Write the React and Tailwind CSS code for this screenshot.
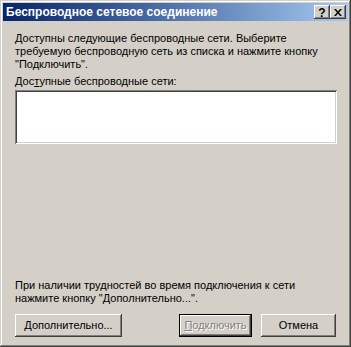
import React from 'react';

const raised = 'shadow-[inset_-1px_-1px_#404040,inset_1px_1px_#ffffff,inset_-2px_-2px_#808080,inset_2px_2px_#d4d0c8]';

function CapButton({ children }) {
  return (
    <div className={`w-[16px] h-[14px] bg-[#d4d0c8] ${raised} flex items-center justify-center`}>
      {children}
    </div>
  );
}

function Button({ children, className = '', disabled, isDefault }) {
  if (isDefault) {
    return (
      <div className={`h-[23px] border border-black bg-[#d4d0c8] ${className}`}>
        <div className={`h-full flex items-center justify-center ${raised}`}>
          <span className={disabled ? 'text-[#808080] [text-shadow:1px_1px_0_#ffffff]' : 'text-black'}>{children}</span>
        </div>
      </div>
    );
  }
  return (
    <div className={`h-[23px] bg-[#d4d0c8] flex items-center justify-center ${raised} ${className}`}>
      <span>{children}</span>
    </div>
  );
}

export default function App() {
  return (
    <div className="w-[351px] h-[347px] bg-[#d4d0c8] p-[3px] shadow-[inset_-1px_-1px_#404040,inset_1px_1px_#d4d0c8,inset_-2px_-2px_#808080,inset_2px_2px_#ffffff] font-['Liberation_Sans',sans-serif] text-[11px] leading-[13px] text-black flex flex-col">
      <div className="h-[18px] flex items-center justify-between pl-[3px] pr-[2px] bg-gradient-to-r from-[#0a246a] to-[#a6caf0]">
        <span className="text-white font-bold text-[12px]">Беспроводное сетевое соединение</span>
        <div className="flex">
          <CapButton>
            <span className="font-bold text-[12px] leading-none mt-[1px]">?</span>
          </CapButton>
          <CapButton>
            <svg width="8" height="7" viewBox="0 0 8 7">
              <path d="M0 0h2l2 2.5L6 0h2L5 3.5 8 7H6L4 4.5 2 7H0l3-3.5z" fill="#000" />
            </svg>
          </CapButton>
        </div>
      </div>

      <div className="flex-1 flex flex-col px-[12px] pt-[11px] pb-[7px]">
        <p>
          Доступны следующие беспроводные сети. Выберите требуемую беспроводную сеть из списка и нажмите кнопку "Подключить".
        </p>
        <p className="mt-[4px]">
          Дос<span className="underline">т</span>упные беспроводные сети:
        </p>
        <div className="mt-[2px] mr-[-1px] h-[54px] bg-white shadow-[inset_1px_1px_#808080,inset_-1px_-1px_#ffffff,inset_2px_2px_#404040,inset_-2px_-2px_#d4d0c8]" />

        <div className="flex-1" />

        <p>
          При наличии трудностей во время подключения к сети нажмите кнопку "Дополнительно...".
        </p>
        <div className="mt-[9px] flex">
          <Button className="w-[107px]">
            <span className="underline">Д</span>ополнительно...
          </Button>
          <Button className="w-[73px] ml-auto" isDefault disabled>
            <span className="underline">П</span>одключить
          </Button>
          <Button className="w-[75px] ml-[9px]">Отмена</Button>
        </div>
      </div>
    </div>
  );
}
